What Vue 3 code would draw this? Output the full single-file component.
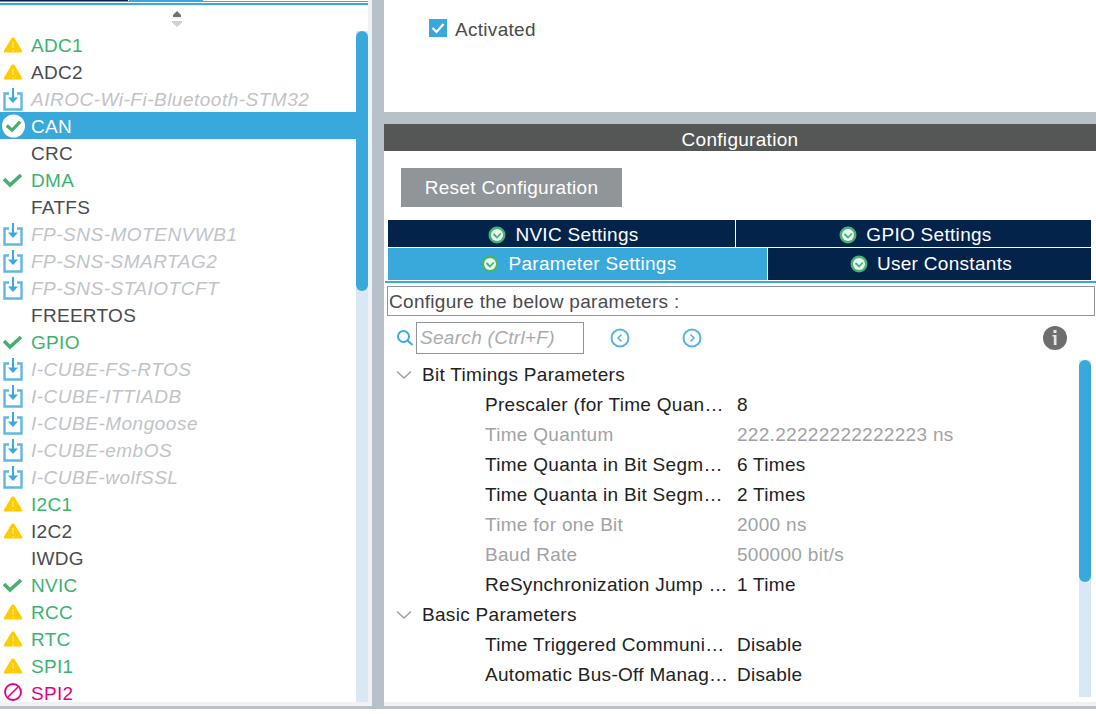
<template>
  <div class="page">
    <div class="main">
      <aside class="left">
        <div class="topTabs">
          <span class="tabDark"></span>
          <span class="tabBlue"></span>
        </div>
        <div class="topLine"></div>
        <div class="sorter">
          <svg width="14" height="16" viewBox="0 0 14 16">
            <path d="M7 0L11 4V6H3V4Z" fill="#6e7072" />
            <path d="M2 7H12" stroke="#e4e4e4" stroke-width="1" />
            <path d="M2 10H12V11.500L7 16L2 11.500Z" fill="#cfd0d1" />
          </svg>
        </div>
        <div class="listWrap">
          <div
            v-for="item in items"
            :key="item.name"
            class="listRow"
            :class="[item.kind, item.selected && 'selected']"
          >
            <span class="rowIcon">
              <svg v-if="item.icon === 'warn'" width="20" height="16" viewBox="0 0 20 16">
                <path d="M10 0.500C11 0.500 11.500 1 12 2L19 13.500C19.600 15 19 15.500 18 15.500H2C1 15.500 0.400 15 1 13.500L8 2C8.500 1 9 0.500 10 0.500Z" fill="#ffcc00" />
                <path d="M10 5V11M10 13V14.500" stroke="#fff3b0" stroke-width="1" />
              </svg>
              <svg v-else-if="item.icon === 'check'" width="20" height="16" viewBox="0 0 20 16">
                <path d="M1 7L7 13L18 3" fill="none" stroke="#46ae70" stroke-width="3.600" />
              </svg>
              <svg v-else-if="item.icon === 'badge'" class="badge" width="24" height="24" viewBox="0 0 24 24">
                <circle cx="12" cy="12" r="12" fill="#fff" />
                <path d="M5 11.500L10.500 16.500L19 7.500" fill="none" stroke="#46ae70" stroke-width="3.400" />
              </svg>
              <svg v-else-if="item.icon === 'pack'" width="20" height="24" viewBox="0 0 20 24">
                <path d="M6 6.500H1.500V22.500H18.500V6.500H14" fill="none" stroke="#62b6e4" stroke-width="2.400" />
                <path d="M10 1V14" stroke="#3ba9de" stroke-width="2" />
                <path d="M5 10.500L10 16L15 10.500Z" fill="#3ba9de" />
              </svg>
              <svg v-else-if="item.icon === 'block'" width="20" height="20" viewBox="0 0 20 20">
                <circle cx="10" cy="9" r="8" fill="none" stroke="#e6007e" stroke-width="1.800" />
                <path d="M5 14L15 4" stroke="#e6007e" stroke-width="1.600" />
              </svg>
            </span>
            <span class="rowText">{{ item.name }}</span>
          </div>
          <div class="leftTrack"><div class="leftThumb"></div></div>
        </div>
      </aside>

      <section class="right">
        <div class="activateBox">
          <span class="checkBox">
            <svg width="18" height="18" viewBox="0 0 18 18">
              <path d="M3.500 9L7.500 13L14.500 5" fill="none" stroke="#fff" stroke-width="2.200" />
            </svg>
          </span>
          <span>Activated</span>
        </div>
        <div class="gap"></div>
        <div class="configBox">
          <div class="configHead">Configuration</div>
          <div class="btnRow"><button class="resetBtn">Reset Configuration</button></div>
          <div class="tabsRowA">
            <div v-for="t in tabsA" :key="t" class="tabCell">
              <svg class="tabIcon" width="18" height="18" viewBox="0 0 18 18">
                <circle cx="9" cy="9" r="8.500" fill="#49b377" />
                <circle cx="9" cy="9" r="6" fill="#e8f6ee" />
                <path d="M5.500 8L9 11.500L12.800 7.500" fill="none" stroke="#49b377" stroke-width="1.800" />
              </svg>
              {{ t }}
            </div>
          </div>
          <div class="tabsRowB">
            <div class="tabCell activeTab">
              <svg class="tabIcon" width="18" height="18" viewBox="0 0 18 18">
                <circle cx="9" cy="9" r="8.500" fill="#49b377" />
                <circle cx="9" cy="9" r="6" fill="#e8f6ee" />
                <path d="M5.500 8L9 11.500L12.800 7.500" fill="none" stroke="#49b377" stroke-width="1.800" />
              </svg>
              Parameter Settings
            </div>
            <div class="tabCell userTab">
              <svg class="tabIcon" width="18" height="18" viewBox="0 0 18 18">
                <circle cx="9" cy="9" r="8.500" fill="#49b377" />
                <circle cx="9" cy="9" r="6" fill="#e8f6ee" />
                <path d="M5.500 8L9 11.500L12.800 7.500" fill="none" stroke="#49b377" stroke-width="1.800" />
              </svg>
              User Constants
            </div>
          </div>
          <div class="tabLine"></div>
          <div class="hintBox">Configure the below parameters :</div>
          <div class="searchRow">
            <svg class="searchIcon" width="18" height="18" viewBox="0 0 18 18">
              <circle cx="7.500" cy="7.500" r="5.500" fill="none" stroke="#3ba9de" stroke-width="2" />
              <path d="M11.500 11.500L16.500 16" stroke="#3ba9de" stroke-width="2" />
            </svg>
            <div class="searchInput">Search (Ctrl+F)</div>
            <svg class="navBtn first" width="20" height="20" viewBox="0 0 20 20">
              <circle cx="10" cy="10" r="8.500" fill="none" stroke="#58b4e2" stroke-width="2" />
              <path d="M11.500 6.500L8 10L11.500 13.500" fill="none" stroke="#58b4e2" stroke-width="1.600" />
            </svg>
            <svg class="navBtn" width="20" height="20" viewBox="0 0 20 20">
              <circle cx="10" cy="10" r="8.500" fill="none" stroke="#58b4e2" stroke-width="2" />
              <path d="M8.500 6.500L12 10L8.500 13.500" fill="none" stroke="#58b4e2" stroke-width="1.600" />
            </svg>
            <svg class="infoIcon" width="24" height="24" viewBox="0 0 24 24">
              <circle cx="12" cy="12" r="12" fill="#6d6e70" />
              <rect x="10.500" y="4" width="3" height="3" fill="#e6e6e6" />
              <path d="M9.500 9H13.500V19H10.800V10.500H9.500Z" fill="#e6e6e6" />
            </svg>
          </div>
          <div class="paramArea">
            <template v-for="group in groups" :key="group.title">
              <div class="groupRow">
                <svg class="chev" width="16" height="10" viewBox="0 0 16 10">
                  <path d="M1 1.500L8 8L15 1.500" fill="none" stroke="#9a9c9e" stroke-width="1.300" />
                </svg>
                {{ group.title }}
              </div>
              <div
                v-for="(p, i) in group.params"
                :key="i"
                class="paramRow"
                :class="{ muted: p.muted }"
              >
                <span class="paramLabel">{{ p.label }}</span>
                <span>{{ p.value }}</span>
              </div>
            </template>
            <div class="rightTrack"><div class="rightThumb"></div></div>
          </div>
        </div>
      </section>
    </div>
    <div class="bottomBar"></div>
  </div>
</template>

<script setup>
const items = [
  { name: "ADC1", kind: "green", icon: "warn" },
  { name: "ADC2", kind: "plain", icon: "warn" },
  { name: "AIROC-Wi-Fi-Bluetooth-STM32", kind: "pack", icon: "pack" },
  { name: "CAN", kind: "plain", icon: "badge", selected: true },
  { name: "CRC", kind: "plain" },
  { name: "DMA", kind: "green", icon: "check" },
  { name: "FATFS", kind: "plain" },
  { name: "FP-SNS-MOTENVWB1", kind: "pack", icon: "pack" },
  { name: "FP-SNS-SMARTAG2", kind: "pack", icon: "pack" },
  { name: "FP-SNS-STAIOTCFT", kind: "pack", icon: "pack" },
  { name: "FREERTOS", kind: "plain" },
  { name: "GPIO", kind: "green", icon: "check" },
  { name: "I-CUBE-FS-RTOS", kind: "pack", icon: "pack" },
  { name: "I-CUBE-ITTIADB", kind: "pack", icon: "pack" },
  { name: "I-CUBE-Mongoose", kind: "pack", icon: "pack" },
  { name: "I-CUBE-embOS", kind: "pack", icon: "pack" },
  { name: "I-CUBE-wolfSSL", kind: "pack", icon: "pack" },
  { name: "I2C1", kind: "green", icon: "warn" },
  { name: "I2C2", kind: "plain", icon: "warn" },
  { name: "IWDG", kind: "plain" },
  { name: "NVIC", kind: "green", icon: "check" },
  { name: "RCC", kind: "green", icon: "warn" },
  { name: "RTC", kind: "green", icon: "warn" },
  { name: "SPI1", kind: "green", icon: "warn" },
  { name: "SPI2", kind: "pink", icon: "block" },
];

const tabsA = ["NVIC Settings", "GPIO Settings"];

const groups = [
  {
    title: "Bit Timings Parameters",
    params: [
      { label: "Prescaler (for Time Quan…", value: "8" },
      { label: "Time Quantum", value: "222.22222222222223 ns", muted: true },
      { label: "Time Quanta in Bit Segm…", value: "6 Times" },
      { label: "Time Quanta in Bit Segm…", value: "2 Times" },
      { label: "Time for one Bit", value: "2000 ns", muted: true },
      { label: "Baud Rate", value: "500000 bit/s", muted: true },
      { label: "ReSynchronization Jump …", value: "1 Time" },
    ],
  },
  {
    title: "Basic Parameters",
    params: [
      { label: "Time Triggered Communi…", value: "Disable" },
      { label: "Automatic Bus-Off Manag…", value: "Disable" },
    ],
  },
];
</script>

<style>
html,
body {
  margin: 0;
  background: #fff;
}
</style>

<style scoped>
.page {
  width: 1096px;
  height: 714px;
  overflow: hidden;
  background: #fff;
  font-family: "Liberation Sans", Arial, sans-serif;
  font-size: 19px;
  color: #4a4b4d;
  letter-spacing: 0.3px;
}
.main {
  display: flex;
  height: 706px;
  background: #b6c2c7;
}
.bottomBar {
  height: 3px;
  background: #b6c2c7;
}

.left {
  flex: 0 0 372px;
  height: 706px;
  box-sizing: border-box;
  padding-right: 4px;
  padding-bottom: 4px;
  background: #f0f1f2;
  display: flex;
  flex-direction: column;
}
.topTabs {
  display: flex;
  height: 3px;
  background: linear-gradient(#fff 1px, #39a9dc 1px, #39a9dc 2px, #fff 2px);
}
.tabDark {
  width: 128px;
  height: 1px;
  background: #03234b;
}
.tabBlue {
  width: 74px;
  height: 2px;
  margin-left: 1px;
  background: #39a9dc;
}
.topLine {
  height: 2px;
  background: #39a9dc;
}
.sorter {
  height: 26px;
  background: #fff;
  display: flex;
  justify-content: center;
  box-sizing: border-box;
  padding: 6px 14px 0 0;
}
.listWrap {
  flex: 1;
  position: relative;
  background: #fff;
  padding-right: 12px;
  overflow: hidden;
}
.listRow {
  height: 27px;
  box-sizing: border-box;
  display: flex;
  align-items: center;
  position: relative;
  padding-left: 31px;
}
.rowText {
  line-height: 16px;
  position: relative;
  top: 1px;
}
.listRow.green {
  color: #3cb371;
}
.listRow.pack {
  color: #c0c4c8;
  font-style: italic;
  letter-spacing: 0.5px;
}
.listRow.pink {
  color: #e6007e;
}
.listRow.selected {
  background: #39a9dc;
  color: #fff;
}
.rowIcon {
  position: absolute;
  left: 3px;
  top: 1px;
  bottom: 0;
  width: 22px;
  display: flex;
  align-items: center;
}
.rowIcon .badge {
  margin-left: -1px;
}
.leftTrack {
  position: absolute;
  top: 0;
  right: 0;
  bottom: 0;
  width: 12px;
  background: #d8e8f5;
}
.leftThumb {
  height: 260px;
  background: #39a9dc;
  border-radius: 6px;
}

.right {
  flex: 0 0 712px;
  margin-left: 12px;
  display: flex;
  flex-direction: column;
}
.activateBox {
  height: 112px;
  background: #fff;
  box-sizing: border-box;
  padding: 19px 0 0 45px;
  display: flex;
  align-items: flex-start;
  gap: 8px;
  line-height: 22px;
}
.checkBox {
  width: 18px;
  height: 18px;
  background: #39a9dc;
  display: block;
}
.gap {
  height: 12px;
}
.configBox {
  flex: 1;
  background: #fff;
  border-bottom: 4px solid #f0f1f2;
  display: flex;
  flex-direction: column;
  min-height: 0;
}
.configHead {
  height: 27px;
  line-height: 31px;
  background: #555756;
  color: #fff;
  text-align: center;
}
.btnRow {
  padding: 17px 0 0 17px;
  height: 69px;
  box-sizing: border-box;
}
.resetBtn {
  display: block;
  width: 221px;
  height: 39px;
  padding: 0;
  border: none;
  background: #909599;
  color: #fff;
  font: inherit;
  letter-spacing: inherit;
}
.tabsRowA,
.tabsRowB {
  display: flex;
  margin: 0 5px 0 4px;
  color: #fff;
}
.tabsRowA {
  height: 27px;
}
.tabsRowB {
  height: 32px;
  border-top: 1px solid #fff;
}
.tabCell {
  background: #03234b;
  display: flex;
  align-items: center;
  justify-content: center;
  gap: 9px;
  box-sizing: border-box;
}
.tabsRowA .tabCell {
  padding: 3px 0 0 4px;
  flex: 1;
}
.tabsRowA .tabCell:first-child {
  flex: 0 0 348px;
  border-right: 1px solid #fff;
}
.tabsRowB .tabCell {
  padding: 0 0 0 3px;
}
.activeTab {
  flex: 0 0 380px;
  background: #39a9dc;
  border-right: 1px solid #fff;
}
.tabsRowB .userTab {
  flex: 1;
  background: #03234b;
}
.tabLine {
  height: 2px;
  margin: 1px 0 0 1px;
  background: #39a9dc;
}
.hintBox {
  height: 30px;
  margin: 3px 1px 0 3px;
  box-sizing: border-box;
  border: 1px solid #8f9599;
  padding-left: 1px;
  line-height: 30px;
}
.searchRow {
  height: 39px;
  display: flex;
  align-items: center;
  padding-left: 12px;
  margin-top: 2px;
}
.searchInput {
  width: 168px;
  height: 32px;
  box-sizing: border-box;
  margin-left: 2px;
  border: 1px solid #8f9599;
  line-height: 30px;
  padding-left: 3px;
  color: #a9abae;
  font-style: italic;
}
.navBtn {
  margin-left: 52px;
}
.navBtn.first {
  margin-left: 26px;
}
.infoIcon {
  margin-left: 341px;
}
.paramArea {
  flex: 1;
  min-height: 0;
  position: relative;
  overflow: hidden;
  padding-top: 3px;
}
.groupRow {
  height: 30px;
  display: flex;
  align-items: center;
  padding-left: 12px;
  gap: 10px;
  color: #222;
}
.paramRow {
  height: 30px;
  display: flex;
  align-items: center;
  padding-left: 101px;
  color: #222;
}
.paramRow.muted {
  color: #a0a2a5;
}
.paramLabel {
  width: 252px;
  white-space: nowrap;
}
.rightTrack {
  position: absolute;
  right: 5px;
  top: 3px;
  bottom: 5px;
  width: 12px;
  background: #d8e8f5;
}
.rightThumb {
  height: 222px;
  background: #39a9dc;
  border-radius: 6px;
}
</style>
